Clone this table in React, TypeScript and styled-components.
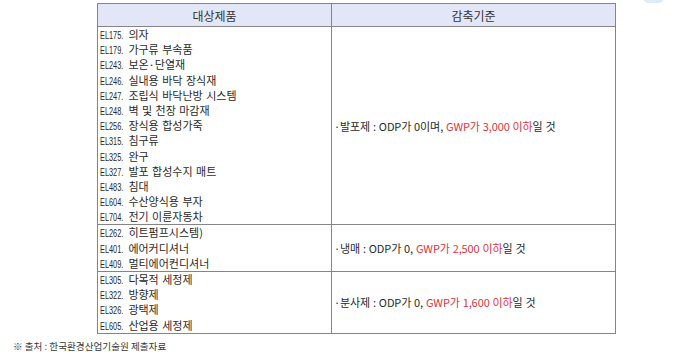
import React from 'react';
import styled, { createGlobalStyle } from 'styled-components';

const GlobalStyle = createGlobalStyle`
  html, body {
    margin: 0;
    padding: 0;
    background: #ffffff;
  }
  body {
    font-family: "Noto Sans CJK KR", "Noto Sans", sans-serif;
    color: #2a2a2a;
  }
`;

const Page = styled.div`
  position: relative;
  width: 680px;
  height: 352px;
  overflow: hidden;
  padding-top: 3px;
  box-sizing: border-box;
`;

const TopPill = styled.div`
  position: absolute;
  top: -8px;
  left: 643px;
  width: 21px;
  height: 11px;
  border-radius: 6px;
  background: #dcecf8;
`;

const Table = styled.table`
  margin-left: 97px;
  width: 518px;
  border-collapse: collapse;
  table-layout: fixed;
  border: 1px solid #858585;
`;

const HeadCell = styled.th`
  height: 22px;
  padding: 0;
  background: #e3e6f7;
  border: 1px solid #858585;
  font-weight: 400;
  font-size: 12px;
  color: #333;
  text-align: center;
  vertical-align: middle;
`;

const ItemCell = styled.td`
  padding: 0 0 0 2px;
  border: 1px solid #858585;
  vertical-align: top;
`;

const RuleCell = styled.td`
  padding: 0 0 0 2px;
  border: 1px solid #858585;
  vertical-align: middle;
  font-size: 11px;
  letter-spacing: -0.1px;
  word-spacing: 0.5px;
  color: #2a2a2a;
  white-space: nowrap;
`;

const Item = styled.div`
  height: 15.2px;
  line-height: 15.2px;
  font-size: 11px;
  word-spacing: 1px;
  white-space: nowrap;
  color: #2a2a2a;
`;

const Code = styled.span`
  display: inline-block;
  font-family: "Liberation Sans", Arial, sans-serif;
  font-size: 11px;
  transform: scaleX(0.67);
  transform-origin: left center;
  margin-right: -6.5px;
`;

const Red = styled.span`
  color: #e6323e;
`;

const Note = styled.div`
  margin: 5px 0 0 13px;
  font-size: 9.6px;
  color: #3a3a3a;
  white-space: nowrap;
`;

type Group = {
  items: [string, string][];
  lead: string;
  red: string;
  tail: string;
};

const groups: Group[] = [
  {
    items: [
      ['EL175.', '의자'],
      ['EL179.', '가구류 부속품'],
      ['EL243.', '보온·단열재'],
      ['EL246.', '실내용 바닥 장식재'],
      ['EL247.', '조립식 바닥난방 시스템'],
      ['EL248.', '벽 및 천장 마감재'],
      ['EL256.', '장식용 합성가죽'],
      ['EL315.', '침구류'],
      ['EL325.', '완구'],
      ['EL327.', '발포 합성수지 매트'],
      ['EL483.', '침대'],
      ['EL604.', '수산양식용 부자'],
      ['EL704.', '전기 이륜자동차'],
    ],
    lead: '·발포제 : ODP가 0이며, ',
    red: 'GWP가 3,000 이하',
    tail: '일 것',
  },
  {
    items: [
      ['EL262.', '히트펌프시스템)'],
      ['EL401.', '에어커디셔너'],
      ['EL409.', '멀티에어컨디셔너'],
    ],
    lead: '·냉매 : ODP가 0, ',
    red: 'GWP가 2,500 이하',
    tail: '일 것',
  },
  {
    items: [
      ['EL305.', '다목적 세정제'],
      ['EL322.', '방향제'],
      ['EL326.', '광택제'],
      ['EL605.', '산업용 세정제'],
    ],
    lead: '·분사제 : ODP가 0, ',
    red: 'GWP가 1,600 이하',
    tail: '일 것',
  },
];

export default function App() {
  return (
    <Page>
      <GlobalStyle />
      <TopPill />
      <Table>
        <colgroup>
          <col style={{ width: 234 }} />
          <col style={{ width: 284 }} />
        </colgroup>
        <thead>
          <tr>
            <HeadCell>대상제품</HeadCell>
            <HeadCell>감축기준</HeadCell>
          </tr>
        </thead>
        <tbody>
          {groups.map((g, i) => (
            <tr key={i}>
              <ItemCell>
                {g.items.map(([code, name]) => (
                  <Item key={code}>
                    <Code>{code}</Code>
                    {name}
                  </Item>
                ))}
              </ItemCell>
              <RuleCell>
                {g.lead}
                <Red>{g.red}</Red>
                {g.tail}
              </RuleCell>
            </tr>
          ))}
        </tbody>
      </Table>
      <Note>※ 출처 : 한국환경산업기술원 제출자료</Note>
    </Page>
  );
}
